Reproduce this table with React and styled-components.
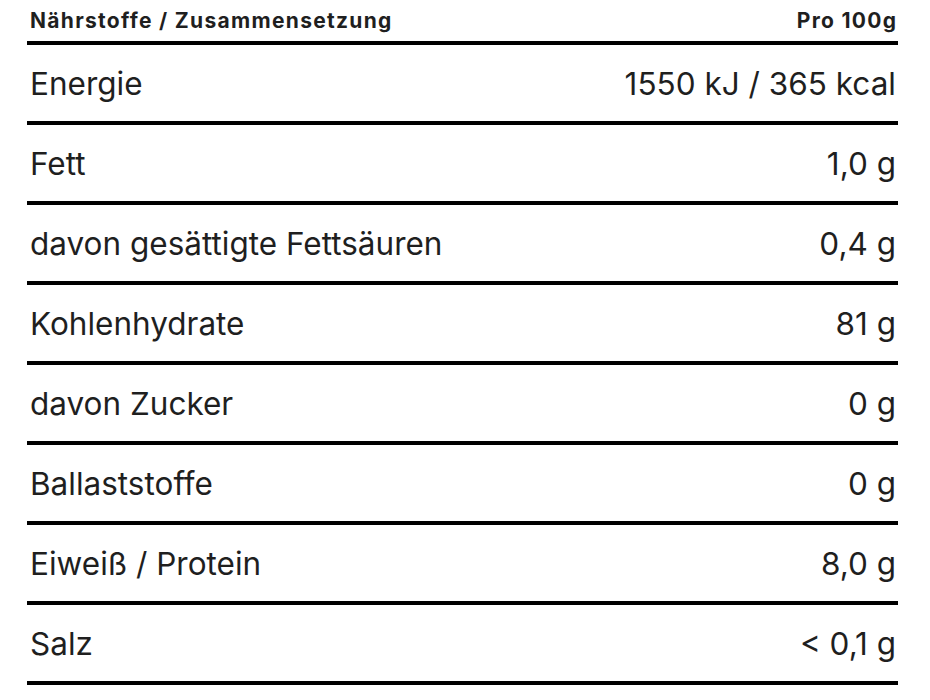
import React from 'react'
import styled, { createGlobalStyle } from 'styled-components'

const rows = [
  { label: 'Energie', value: '1550 kJ / 365 kcal' },
  { label: 'Fett', value: '1,0 g' },
  { label: 'davon gesättigte Fettsäuren', value: '0,4 g' },
  { label: 'Kohlenhydrate', value: '81 g' },
  { label: 'davon Zucker', value: '0 g' },
  { label: 'Ballaststoffe', value: '0 g' },
  { label: 'Eiweiß / Protein', value: '8,0 g' },
  { label: 'Salz', value: '< 0,1 g' },
]

export default function App() {
  return (
    <>
      <GlobalStyle />
      <Table>
        <HeaderRow>
          <HeaderCell>Nährstoffe / Zusammensetzung</HeaderCell>
          <HeaderCell>Pro 100g</HeaderCell>
        </HeaderRow>
        {rows.map((r) => (
          <Row key={r.label}>
            <Cell>{r.label}</Cell>
            <Cell>{r.value}</Cell>
          </Row>
        ))}
      </Table>
    </>
  )
}

const GlobalStyle = createGlobalStyle`
  body {
    margin: 0;
    background: #fff;
    font-family: Inter, "Liberation Sans", sans-serif;
    color: #1f1f1f;
  }
`

const Table = styled.div`
  margin: 0 32px 0 27px;
  display: flex;
  flex-direction: column;
`

const HeaderRow = styled.div`
  display: flex;
  justify-content: space-between;
  align-items: center;
  height: 45px;
  padding: 0 2px 0 3px;
  border-bottom: 4px solid #000;
  box-sizing: border-box;
`

const HeaderCell = styled.div`
  font-size: 21px;
  font-weight: 700;
  letter-spacing: 1.3px;
  margin-right: -1.3px;
`

const Row = styled.div`
  display: flex;
  justify-content: space-between;
  align-items: center;
  height: 80px;
  box-sizing: border-box;
  padding: 0 2px 0 3px;
  border-bottom: 4px solid #000;
`

const Cell = styled.div`
  font-size: 31.5px;
  font-weight: 400;
`
